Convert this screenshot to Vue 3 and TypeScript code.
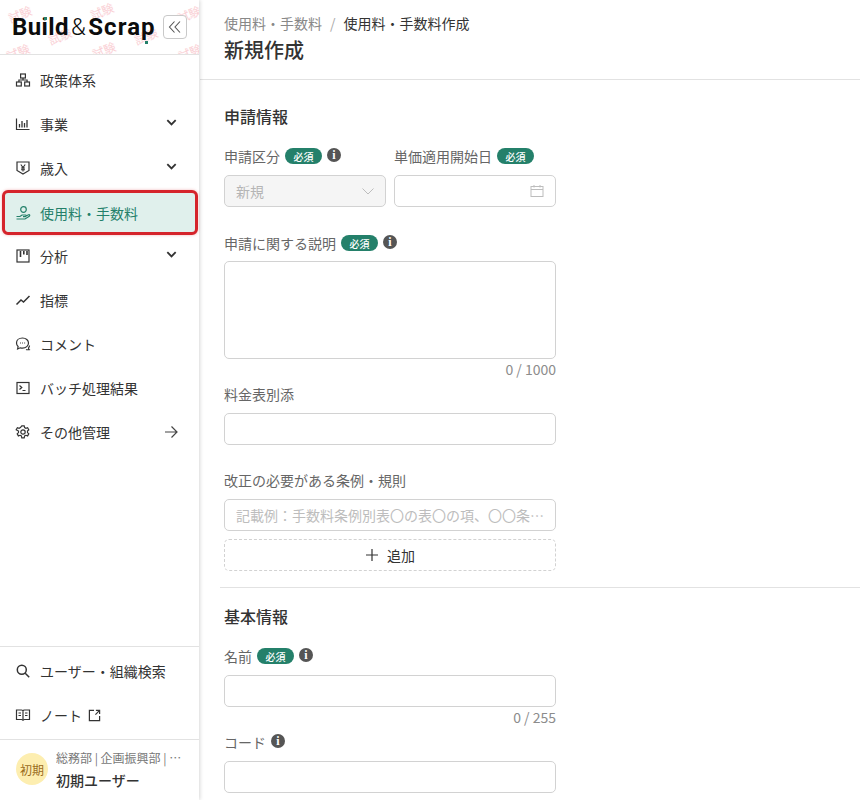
<script setup lang="ts">
interface NavItem {
  label: string;
  icon: string;
  trail?: "chevron" | "arrow";
  active?: boolean;
}

const navItems: NavItem[] = [
  { label: "政策体系", icon: "tree" },
  { label: "事業", icon: "chart", trail: "chevron" },
  { label: "歳入", icon: "yen", trail: "chevron" },
  { label: "使用料・手数料", icon: "hand", active: true },
  { label: "分析", icon: "board", trail: "chevron" },
  { label: "指標", icon: "line" },
  { label: "コメント", icon: "chat" },
  { label: "バッチ処理結果", icon: "term" },
  { label: "その他管理", icon: "gear", trail: "arrow" },
];

// 透かしの位置
const marks = [
  { x: 8, y: 6 },
  { x: 90, y: 3 },
  { x: 177, y: 6 },
  { x: 48, y: 28 },
  { x: 134, y: 28 },
  { x: 6, y: 44 },
  { x: 92, y: 42 },
  { x: 178, y: 44 },
];
</script>

<template>
  <div class="page">
    <aside class="sidebar">
      <div class="brand">
        <span v-for="(m, i) in marks" :key="i" class="mark" :style="{ left: m.x + 'px', top: m.y + 'px' }">試験</span>
        <div class="logo">
          <b>Build</b><span class="amp">&amp;</span><b class="scrap">Scrap</b>
          <i class="dot dot-i"></i>
          <i class="dot dot-p"></i>
        </div>
        <button class="collapse">
          <svg width="14" height="14" viewBox="0 0 14 14" fill="none" stroke="#555" stroke-width="1.1">
            <path d="M6.5 1.5 1.5 7l5 5.5M12 1.5 7 7l5 5.5" />
          </svg>
        </button>
      </div>

      <nav class="nav">
        <a v-for="item in navItems" :key="item.label" class="nav-item" :class="{ active: item.active }">
          <svg class="nav-icon" viewBox="0 0 16 16" fill="none" stroke="currentColor" stroke-width="1.2">
            <template v-if="item.icon === 'tree'">
              <rect x="5.6" y="2" width="4.8" height="4" />
              <rect x="1.5" y="10" width="4.8" height="4" />
              <rect x="9.7" y="10" width="4.8" height="4" />
              <path d="M8 6v2M3.9 10V8h8.2v2" />
            </template>
            <template v-else-if="item.icon === 'chart'">
              <path d="M1.5 2.5v11h13" />
              <path d="M4.500 11.500V8M7 11.500V5M9.500 11.500V7M12 11.500V4" stroke-width="1.3" />
            </template>
            <template v-else-if="item.icon === 'yen'">
              <path d="M2 2h12v8.500L8 14l-6-3.500z" />
              <path d="m5.800 4.500 2.200 3 2.200-3M8 7.500v4M6 8h4M6 9.800h4" stroke-width="1.1" />
            </template>
            <template v-else-if="item.icon === 'hand'">
              <circle cx="8.500" cy="4.500" r="2.800" />
              <path d="M1.500 11.500H5l2-1.500h3.500c.8 0 .8 1.600 0 1.600H8M11 11l2.600-1.200c1-.4 1.600.8.7 1.400L10 14H1.500" />
            </template>
            <template v-else-if="item.icon === 'board'">
              <rect x="2" y="2" width="12" height="12" />
              <path d="M5.500 3v6M8.800 3v3.500M12 3v4" stroke-width="1.6" />
            </template>
            <template v-else-if="item.icon === 'line'">
              <path d="m1.500 12.500 4.500-4.500 2.500 2L14.500 4" stroke-width="1.500" />
            </template>
            <template v-else-if="item.icon === 'chat'">
              <path d="M7.500 2C4 2 1.500 4.200 1.500 7c0 1.400.6 2.600 1.600 3.500L2.600 13l2.600-1.200c.7.2 1.500.3 2.300.3 3.400 0 6-2.200 6-5S11 2 7.500 2z" />
              <path d="M11 13.500c1 .4 2 .3 3.200.1-.5-.5-.7-1-.7-1.700.7-.7 1-1.500 1-2.400" />
              <path d="M5 7h.9M7.100 7H8M9.200 7h.9" />
            </template>
            <template v-else-if="item.icon === 'term'">
              <rect x="2" y="2.500" width="12" height="11" />
              <path d="m4.500 5.500 2.300 2-2.300 2M7.500 10.500h3" />
            </template>
            <template v-else>
              <circle cx="8" cy="8" r="2.200" />
              <path d="M6.800 1.800h2.400l.4 1.800 1.300.7 1.700-.6 1.200 2.100-1.300 1.200v1.600l1.300 1.200-1.200 2.100-1.700-.6-1.300.7-.4 1.800H6.800l-.4-1.800-1.300-.7-1.700.6-1.200-2.100 1.300-1.200V7L1.200 5.800l1.200-2.100 1.700.6 1.300-.7z" />
            </template>
          </svg>
          <span class="nav-label">{{ item.label }}</span>
          <svg v-if="item.trail === 'chevron'" class="trail" viewBox="0 0 14 14" fill="none" stroke="#333" stroke-width="2">
            <path d="m2.500 4.500 4.500 4.500 4.500-4.500" />
          </svg>
          <svg v-if="item.trail === 'arrow'" class="trail arrow" viewBox="0 0 14 14" fill="none" stroke="#444" stroke-width="1.2">
            <path d="M1 7h12M7.500 1.500 13 7l-5.500 5.500" />
          </svg>
        </a>
      </nav>

      <div class="nav-bottom">
        <a class="nav-item">
          <svg class="nav-icon" viewBox="0 0 16 16" fill="none" stroke="currentColor" stroke-width="1.500">
            <circle cx="6.800" cy="6.800" r="4.500" />
            <path d="m10.200 10.200 4 4" />
          </svg>
          <span class="nav-label">ユーザー・組織検索</span>
        </a>
        <a class="nav-item">
          <svg class="nav-icon" viewBox="0 0 16 16" fill="none" stroke="currentColor" stroke-width="1.200">
            <path d="M1.500 3h5c.8 0 1.500.5 1.500 1.200C8 3.500 8.700 3 9.500 3h5v9.500h-5c-.8 0-1.500.3-1.500 1 0-.7-.7-1-1.500-1h-5z" />
            <path d="M8 4.200v9.300M3.500 6H6M3.500 8.500H6M10 6h2.500M10 8.500h2.500" />
          </svg>
          <span class="nav-label">ノート</span>
          <svg class="ext" viewBox="0 0 14 14" fill="none" stroke="#333" stroke-width="1.300">
            <path d="M6.500 1.500h-5v11h11v-5M8 6l4.500-4.500M8.500 1.500h4v4" />
          </svg>
        </a>
      </div>

      <div class="user">
        <div class="avatar">初期</div>
        <div class="user-text">
          <div class="dept">総務部 | 企画振興部 | 企画課</div>
          <div class="uname">初期ユーザー</div>
        </div>
      </div>
    </aside>

    <main class="main">
      <header class="head">
        <div class="crumb">
          <span class="crumb-link">使用料・手数料</span>
          <span class="crumb-sep">/</span>
          <span>使用料・手数料作成</span>
        </div>
        <h1>新規作成</h1>
      </header>

      <section class="section first">
        <h2>申請情報</h2>
        <div class="row">
          <div class="col">
            <div class="label">申請区分<span class="req">必須</span><span class="info">i</span></div>
            <div class="input disabled">
              <span>新規</span>
              <svg width="12" height="12" viewBox="0 0 12 12" fill="none" stroke="#bdbdbd" stroke-width="1">
                <path d="m.5 3.500 5.500 5.500 5.500-5.500" />
              </svg>
            </div>
          </div>
          <div class="col">
            <div class="label">単価適用開始日<span class="req">必須</span></div>
            <div class="input end">
              <svg width="14" height="14" viewBox="0 0 14 14" fill="none" stroke="#bdbdbd" stroke-width="1">
                <rect x="1" y="2.500" width="12" height="10" />
                <path d="M1 5.500h12M4 1v2.500M10 1v2.500" />
              </svg>
            </div>
          </div>
        </div>

        <div class="label gap-top tall">申請に関する説明<span class="req">必須</span><span class="info">i</span></div>
        <div class="input textarea"></div>
        <div class="count">0 / 1000</div>

        <div class="label tight">料金表別添</div>
        <div class="input"></div>

        <div class="label gap-top">改正の必要がある条例・規則</div>
        <div class="input"><span class="placeholder">記載例：手数料条例別表〇の表〇の項、〇〇条例第〇条第〇項</span></div>
        <div class="add">
          <svg width="14" height="14" viewBox="0 0 14 14" fill="none" stroke="#333" stroke-width="1.200">
            <path d="M7 1v12M1 7h12" />
          </svg>
          <span>追加</span>
        </div>
      </section>

      <hr class="divider" />

      <section class="section">
        <h2>基本情報</h2>
        <div class="label">名前<span class="req">必須</span><span class="info">i</span></div>
        <div class="input"></div>
        <div class="count">0 / 255</div>
        <div class="label tight">コード<span class="info">i</span></div>
        <div class="input"></div>
      </section>
    </main>
  </div>
</template>

<style>
html,
body {
  margin: 0;
  height: 100%;
  overflow: hidden;
  background: #fff;
}
</style>

<style scoped>
.page {
  display: flex;
  height: 800px;
  font-family: "Noto Sans CJK JP", "Noto Sans", sans-serif;
  font-size: 14px;
  color: #333;
}

.sidebar {
  width: 199px;
  flex-shrink: 0;
  display: flex;
  flex-direction: column;
  background: #fff;
  box-shadow: 1px 0 4px rgba(0, 0, 0, 0.16);
  position: relative;
  margin-right: 1px;
}

.brand {
  position: relative;
  height: 55px;
  box-sizing: border-box;
  border-bottom: 1px solid #e2e2e2;
  display: flex;
  align-items: center;
  justify-content: space-between;
  padding: 0 12px;
  overflow: hidden;
}

.mark {
  position: absolute;
  font-size: 12px;
  line-height: 16px;
  color: #fad0d5;
  transform: rotate(-22deg);
  white-space: nowrap;
}

.logo {
  position: relative;
  font-family: "Roboto", sans-serif;
  font-size: 24px;
  line-height: 28px;
  color: #0c0c0c;
  letter-spacing: 0.4px;
  white-space: nowrap;
}

.logo b {
  font-weight: 700;
}

.logo .scrap {
  letter-spacing: 1.1px;
}

.amp {
  font-weight: 300;
  margin: 0 2px;
}

.dot {
  position: absolute;
  width: 3px;
  height: 3px;
  background: #24806a;
}

.dot-i {
  left: 32px;
  top: 4px;
}

.dot-p {
  left: 133px;
  top: 28px;
}

.collapse {
  position: relative;
  width: 24px;
  height: 24px;
  box-sizing: border-box;
  padding: 0;
  display: flex;
  align-items: center;
  justify-content: center;
  background: #fff;
  border: 1px solid #c9c9c9;
  border-radius: 4px;
}

.nav {
  padding-top: 3px;
  flex: 1;
}

.nav-item {
  height: 44px;
  display: flex;
  align-items: center;
  padding-left: 15px;
  box-sizing: border-box;
  color: #333;
}

.nav-item.active {
  height: 45px;
  margin: 0 1px -1px 2px;
  padding-left: 10px;
  color: #24806a;
  background: #e0f0ec;
  border: 3px solid #d5242b;
  border-radius: 6px;
  box-shadow: 0 0 3px rgba(213, 36, 43, 0.35);
}

.nav-icon {
  width: 16px;
  height: 16px;
  flex-shrink: 0;
  margin-right: 9px;
}

.nav-label {
  white-space: nowrap;
  font-size: 14px;
}

.trail {
  width: 13px;
  height: 13px;
  margin-left: auto;
  margin-right: 21px;
  margin-top: -3px;
}

.trail.arrow {
  width: 14px;
  height: 14px;
  margin-top: 0;
}

.ext {
  width: 13px;
  height: 13px;
  margin-left: 6px;
}

.nav-bottom {
  border-top: 1px solid #e2e2e2;
  border-bottom: 1px solid #e2e2e2;
  padding: 2px 0;
}

.user {
  height: 60px;
  box-sizing: border-box;
  display: flex;
  align-items: center;
  padding: 0 16px 2px;
  gap: 8px;
}

.avatar {
  width: 32px;
  height: 32px;
  border-radius: 50%;
  background: #fdeeb0;
  color: #9a6c1c;
  font-size: 12px;
  display: flex;
  align-items: center;
  justify-content: center;
  flex-shrink: 0;
}

.user-text {
  min-width: 0;
  flex: 1;
}

.dept {
  font-size: 12px;
  line-height: 18px;
  color: #777;
  white-space: nowrap;
  overflow: hidden;
  text-overflow: ellipsis;
}

.uname {
  font-size: 14px;
  line-height: 20px;
  margin-top: 3px;
  font-weight: 500;
  color: #333;
}

.main {
  flex: 1;
  min-width: 0;
  overflow: hidden;
}

.head {
  height: 80px;
  box-sizing: border-box;
  border-bottom: 1px solid #e2e2e2;
  padding: 13px 24px 0;
}

.crumb {
  font-size: 14px;
  line-height: 20px;
  color: #333;
  display: flex;
  gap: 8px;
}

.crumb-link {
  color: #888;
}

.crumb-sep {
  color: #aaa;
}

h1 {
  margin: 3px 0 0;
  font-size: 20px;
  line-height: 28px;
  font-weight: 500;
  color: #333;
}

.section {
  padding: 0 24px;
  width: 332px;
}

.section.first {
  padding-top: 24px;
}

h2 {
  margin: 0 0 18px;
  font-size: 16px;
  line-height: 24px;
  font-weight: 500;
  color: #333;
}

.first h2 {
  margin-bottom: 17px;
}

.row {
  display: flex;
  gap: 8px;
}

.col {
  flex: 1;
  min-width: 0;
}

.label {
  display: flex;
  align-items: center;
  height: 20px;
  color: #666;
  font-size: 14px;
  margin-bottom: 9px;
  white-space: nowrap;
}

.col .label {
  height: 22px;
  margin-bottom: 8px;
}

.label.tall {
  height: 22px;
  margin-bottom: 7px;
}

.label.gap-top {
  margin-top: 25px;
}

.label.tight {
  margin-top: 3px;
}

.req {
  display: inline-flex;
  align-items: center;
  justify-content: center;
  width: 37px;
  height: 16px;
  margin-left: 5px;
  background: #24806a;
  color: #fff;
  border-radius: 8px;
  font-size: 10px;
  font-weight: 500;
}

.info {
  width: 14px;
  height: 14px;
  margin-left: 5px;
  margin-top: -2px;
  border-radius: 50%;
  background: #555;
  color: #fff;
  font-family: "Liberation Serif", serif;
  font-size: 12px;
  font-weight: 700;
  line-height: 14px;
  text-align: center;
}

.input {
  height: 32px;
  box-sizing: border-box;
  border: 1px solid #d2d2d2;
  border-radius: 5px;
  background: #fff;
  display: flex;
  align-items: center;
  justify-content: space-between;
  padding: 0 11px;
}

.input.disabled {
  background: #f5f5f5;
  color: #b5b5b5;
}

.input.end {
  justify-content: flex-end;
}

.input.textarea {
  height: 98px;
}

.placeholder {
  color: #bdbdbd;
  white-space: nowrap;
  overflow: hidden;
  text-overflow: ellipsis;
}

.count {
  text-align: right;
  font-size: 14px;
  line-height: 20px;
  padding-bottom: 2px;
  color: #8c8c8c;
}

.add {
  height: 32px;
  margin-top: 8px;
  box-sizing: border-box;
  border: 1px dashed #d2d2d2;
  border-radius: 5px;
  display: flex;
  align-items: center;
  justify-content: center;
  gap: 8px;
  color: #333;
}

.divider {
  margin: 16px 0 16px 20px;
  border: none;
  border-top: 1px solid #e2e2e2;
}
</style>
